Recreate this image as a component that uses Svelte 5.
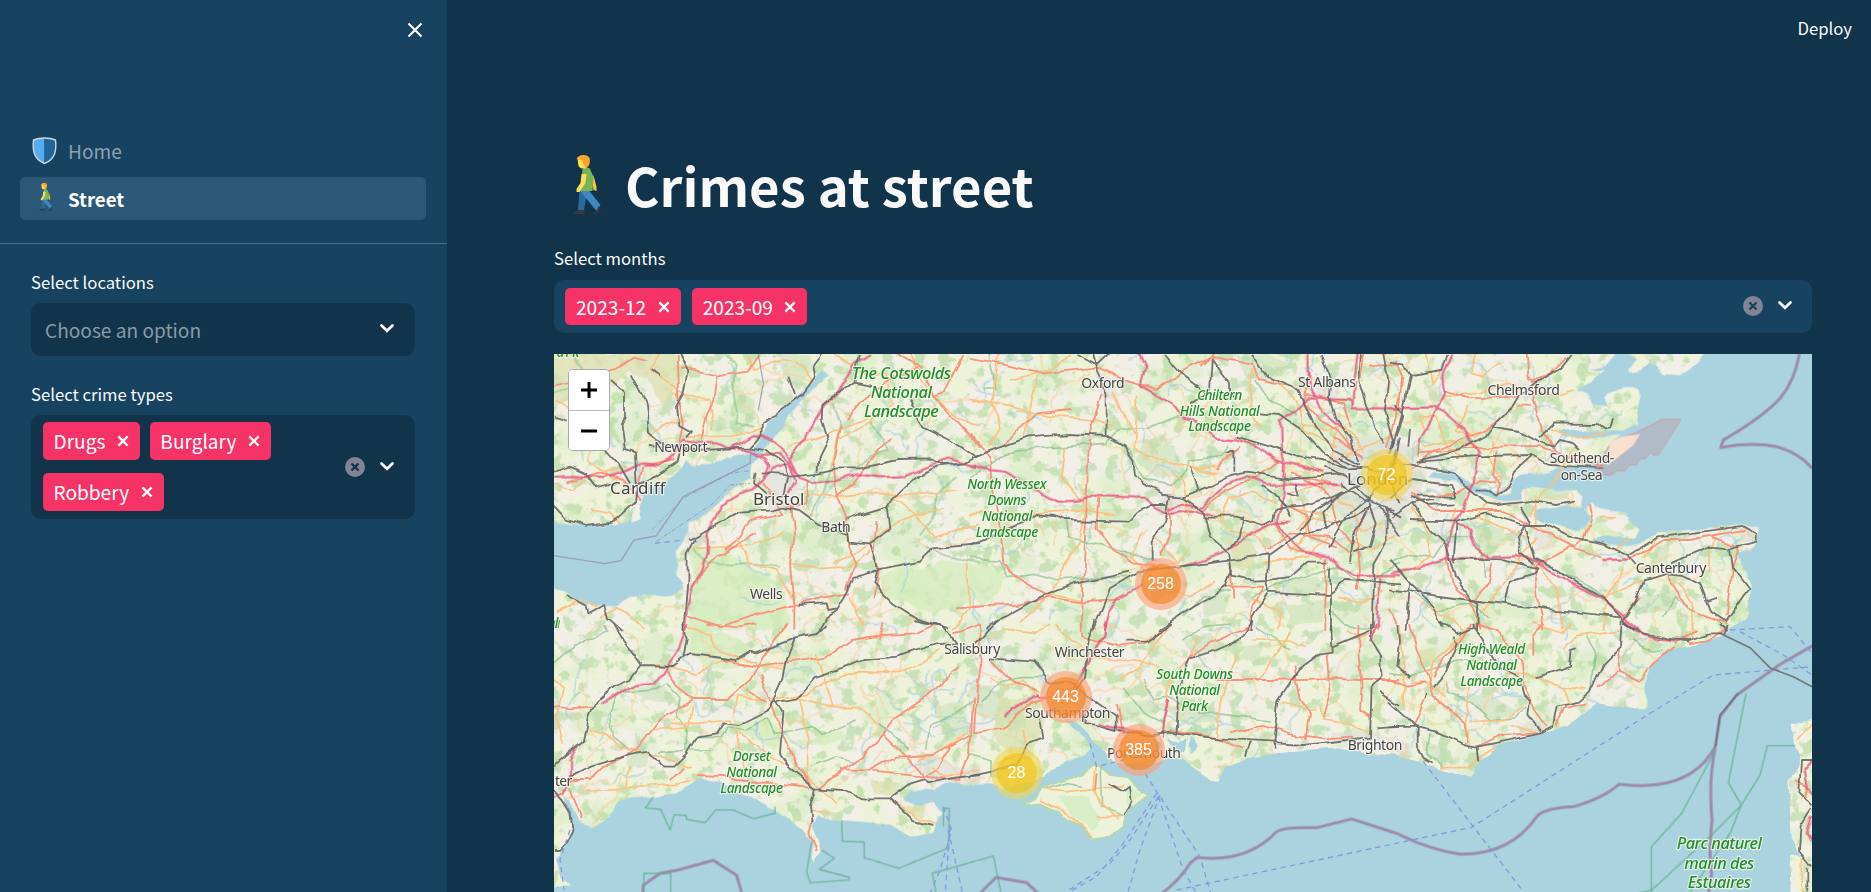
<script>
  const pages = [
    { name: 'Home', icon: 'shield', active: false },
    { name: 'Street', icon: 'walker', active: true }
  ];
  const crimeTypes = ['Drugs', 'Burglary', 'Robbery'];
  const months = ['2023-12', '2023-09'];

  // Cluster pins, positioned in pixels from the map's top left corner.
  const clusters = [
    { n: 72, x: 832.5, y: 121, size: 'medium' },
    { n: 258, x: 606.5, y: 230, size: 'large' },
    { n: 443, x: 511.5, y: 343, size: 'large' },
    { n: 385, x: 584.5, y: 396, size: 'large' },
    { n: 28, x: 462.5, y: 419, size: 'medium' }
  ];

  // The map is kept as six sheets; each has its own origin in map units (3 units = 1px).
  const sheets = [
    {
      x: 0, y: 0,
      sea: 'M0,510L60,518L110,525L200,522L265,508L268,460L290,420L340,395L395,350L410,325L430,350L480,348L520,325L600,305L640,255L655,215L700,178L740,140L790,95L815,63L845,75L800,112L765,135L740,172L705,215L670,262L640,300L610,340L605,385L540,420L500,460L450,512L415,520L415,550L400,580L380,600L385,650L375,680L395,715L360,738L290,730L230,750L200,765L140,765L100,765L60,735L0,705Z',
      hill: 'M12,12H370L388,60L370,140L330,160L290,90L240,60L190,110L120,90L60,150L12,180ZM60,0',
      meadow: 'M420,590L520,600L600,650L700,720L720,820L640,840H420L430,700ZM985,690L1040,655L1120,660L1180,630L1260,640L1290,700L1250,760L1150,790L1060,750L1010,740Z',
      wood: 'M690,12H770L790,60L740,110L700,80ZM470,220L520,200L535,235L490,245ZM545,90L610,150L610,210L560,190ZM850,495L895,510L890,570L830,600L800,580Z',
      town: 'M655,370L710,360L750,400L720,470L660,490L640,420ZM225,350L290,345L300,420L260,450L220,420ZM400,545L465,550L460,580L410,585Z',
      second: 'M12,160L90,190L130,260L110,330L210,400M330,12L300,60L350,100L400,130L480,150L490,240M12,400L70,420L120,380L230,350M590,12L610,60L700,30L760,50L790,100M405,262L540,258L640,235M720,290L790,270L860,240L980,200M760,430L850,440L960,430L1100,435L1220,420M850,640L900,620L1000,545L1100,490L1180,480M720,640L820,655L900,650L960,600M430,595L540,590L600,590L700,550M730,750L680,660L590,640M560,560L600,650M850,12L960,80L1010,60M1150,140L1220,200L1290,230M1030,440L1100,490L1150,560L1290,520M1000,60L1030,160L960,220L860,270L840,350M900,740L940,830M1080,12L1110,80L1150,140M1250,640L1255,780L1210,840M150,800L200,770L240,800L280,840M20,790L100,750L140,770M300,260L350,220L410,210M120,480L180,490L210,520',
      primary: 'M12,110L110,85L190,60L260,20L290,30M380,12L385,150L395,220L385,280M390,52L500,80L590,65L625,12M500,80L490,150L470,200L455,270M1040,12L1120,60L1150,140L1290,290M1150,140L1180,130L1240,12M895,210L960,130L1030,80L1110,60M870,230L850,330L860,440L890,530L895,590L920,640L890,720M1020,260L900,410L855,440M720,460L730,560L720,640L730,760L730,840M620,550L500,620L460,660L440,700M410,795L510,830L600,800L730,765L830,740L900,730M980,510L970,620L985,660L970,740M640,400L700,490L600,510L570,560L520,600M770,390L770,460L720,470M265,420L280,350L370,330M50,395L150,370L220,390L270,450M1220,775L1290,770',
      motor: 'M12,380L75,378L165,384L230,362L270,342L320,348L365,320L395,272L440,278L500,280L535,295L570,280L610,255L640,258L690,290L720,330L745,380M960,12L915,40L880,95L860,135L825,165L795,215L770,270L740,300L715,340L670,355L640,390L610,418L570,430L515,462L497,500L470,550L470,610L450,670L425,710L410,780L405,840M535,293L600,300L640,325L655,350L640,385M630,315L680,310L715,340L745,380L780,392L850,396L925,372L985,382L1060,378L1110,360L1165,338L1190,325L1275,350M715,345L735,390L712,430',
      rail: 'M388,12L412,65L400,130L378,170L385,225L420,245L405,262M300,285L470,300L535,295L600,292L640,300L700,340L712,375L700,440M600,292L635,255L635,225L700,175L760,130L795,80L790,45L815,12M635,370L720,377L805,368L860,355L930,355L1050,330L1150,328L1180,345L1240,340L1290,310M930,12L910,95L850,140L820,165L818,205L835,260L805,320L803,362M420,572L500,525L570,485L665,478L700,470L745,480L800,520L850,540L890,555M890,530L895,575L960,580L975,620L980,665L970,700L1030,760L1100,805L1200,835M885,510L925,495L1010,470L1030,440L1090,385L1160,350L1240,340M1010,470L1018,540L960,580M980,662L1110,635L1150,595L1290,582M980,665L910,690L890,730L860,780L830,800L808,840M435,570L413,610L412,700L400,840M12,203L50,215M180,90L225,130L225,200L215,225L225,300L255,310L260,400M245,70L290,155L300,245L350,285M155,285L205,340L240,400M12,365L60,350L105,370L140,415L200,400M12,465L50,505L110,525L190,515L255,455L262,400L300,390L380,335L388,300M740,765L830,760L835,780L860,775M1080,150L1120,230L1200,270L1270,318M910,95L960,105M620,365L615,400L650,430M715,80L735,135M305,60L330,80M50,738L110,770L115,790L160,765L170,800L215,840',
      park: 'M520,12L560,40L550,120L560,220L610,230M850,160L870,220L850,330L820,430L780,500M960,220L1020,300L960,320L900,370M1220,380L1160,430L1150,500L1110,560M430,595L470,640L560,640L690,650M1130,590L1200,620L1290,640M60,12L100,60L90,110L12,130'
    },
    {
      x: 1260, y: 0,
      hill: 'M790,570L830,560L860,620L820,670L790,640Z',
      meadow: 'M0,650L50,640L100,670L90,730L40,770L0,740Z',
      wood: 'M790,20L890,12L960,40L900,90L830,80ZM520,270L620,290L640,370L560,390L500,330ZM760,530L800,540L790,590L750,570ZM390,480L500,470L470,510L410,520ZM930,690L1040,680L1060,720L960,740ZM60,500L170,540L110,600L60,570ZM700,740L780,730L760,790L700,800ZM950,760L1060,750L1050,820L960,830Z',
      town: 'M1080,270L1290,260V560L1200,560L1120,500L1060,420ZM560,430L640,430L650,490L580,490ZM370,60L430,90L450,140L390,140ZM1040,100L1110,90L1100,150L1040,140Z',
      second: 'M90,12L70,160L90,230L60,290M0,145L120,170L240,200L380,210L430,230M280,290L270,380L350,470L330,560M500,140L490,290L580,330L740,370M200,80L180,180L160,260M430,120L490,260M660,500L640,400L600,360M660,350L740,350M850,60L840,180L870,230M0,490L180,490L330,480L440,500M240,740L300,620L330,570M150,820L240,730L340,750M520,540L480,620L560,690L660,740L740,690M660,600L620,640L560,560M780,540L860,560L890,620M880,640L1010,620L1080,560M840,740L930,790L920,840M1000,450L1010,550L960,610M1060,400L960,430L970,480L1080,500M1100,240L1080,330L1160,300L1280,250M920,100L990,160L1000,240L1100,290M1060,430L1140,470L1180,540L1240,520M980,340L1060,370L1050,430M1130,570L1200,600L1280,560M1100,740L1180,760L1240,720M980,540L1010,500L1090,520M1000,220L1060,240L1120,230L1180,300M750,520L780,440L850,430L920,460M300,12L240,60L120,90',
      primary: 'M0,20L100,40L220,70L380,52L460,90L560,120L640,60L720,20L850,45L870,90L950,110M360,260L380,180L395,130M360,270L355,400L345,560L340,700L335,840M0,250L60,320L65,420L90,520L100,640L130,680L240,740L340,755L450,745M0,770L140,765L240,740M100,290L130,250L200,190L300,180M385,440L380,530L430,600L490,640L560,650M600,470L600,560L570,620M740,360L790,305L810,290M700,480L770,420L860,380L930,330M1020,60L1000,150L1050,210L1100,240L1150,300M920,515L960,600L1060,620M950,470L1010,500L1020,560L1100,590M1190,480L1160,560L1170,660L1160,720M1000,130L1120,160L1140,230M1290,140L1270,230L1250,290M770,710L880,710L850,760L840,840M1090,260L1180,320M960,370L1120,410M1000,380L1080,440L1100,520L1150,590M1070,620L1060,760L1060,840M1180,12L1170,80M1200,50L1290,40M690,45L730,12M785,640L790,740M890,600L960,550L1080,560L1150,620',
      motor: 'M0,345L60,360L105,365L160,395L210,430L265,455L340,450L385,435L520,440L550,470L600,492L680,480L730,495M600,480L640,460L700,470L770,400L830,378L890,400L960,400L1100,405M508,12L525,50L512,110L600,160L630,200L670,210L740,262L800,268L850,285L925,330L960,340L1060,365M1155,165L1140,150L1010,145L985,170L930,215L932,290L945,340L940,440L920,510L970,580L1000,605L1075,615L1110,655L1160,675L1290,675M960,515L920,515L850,550L760,610L640,650M520,700L440,745L415,790L402,840M1015,12L1018,100L1060,190L1120,240M1155,90L1150,175L1290,175M1160,12L1150,90M1225,680L1220,840',
      rail: 'M0,325L80,295L175,262L300,252L410,258L465,290L490,330L495,375L520,405L580,435L640,440L700,415L780,375L830,365L960,385L1120,372M370,12L380,60L410,130L410,258M320,12L380,45L415,12M580,12L620,60L680,105L710,130L660,160M725,25L760,75L780,100L780,135L800,145M725,25L720,120M0,585L30,575L170,515L200,492L250,498L285,510L470,515L500,485L540,465L590,465M600,440L585,520L545,575L545,640M640,440L700,480L720,560L780,610L790,680L850,692L895,690L960,680L1010,635L1075,635M500,665L640,648L780,632L900,615L990,550L1070,535L1150,500L1200,470M700,500L800,500L880,525L910,510L915,475L1000,470L1080,445L1120,425M480,665L310,700L210,740L60,825L50,840M500,668L420,715L390,790L370,840M565,840L640,790L770,710L790,660M895,615L890,700L895,725L1075,735L1130,690L1290,700M895,725L850,800L845,840M845,12L890,80L985,120L1010,170L1035,230L1090,300L1170,340M1055,12L1085,80L1080,140L1100,210L1140,270L1165,330M1170,12L1165,90L1190,170L1215,240L1240,280M1240,12L1255,90L1245,180L1275,280M870,190L930,195L990,235L1060,310L1120,345M800,260L900,290L980,320L1050,330L1130,350M660,350L685,420M790,365L790,300L770,310M1250,480L1250,570L1210,640L1205,840M1270,480L1180,450L1110,400M1080,650L1080,840M875,405L910,430L945,470L960,500M1200,470L1150,560L1140,640M1110,430L1060,490L1070,540M1280,300L1260,370L1180,400L1120,430L1030,490L990,540M1290,260L1270,360L1200,440L1130,500L1080,590M1100,320L1170,350L1250,370L1290,460M1130,355L1200,350M1190,440L1220,520L1200,590L1150,610M980,400L990,440L950,430M820,500L810,560L780,600M1230,470L1290,560M1060,350L1130,380L1200,450L1290,500',
      park: 'M0,385L80,330L140,300L280,290L410,280L450,240L530,240L600,210L640,190M480,300L520,390L600,410L640,370L660,330L760,320L780,280M0,625L90,630L110,680L190,670L260,690L400,680L470,680M290,500L300,560L380,580L500,620L560,640M860,90L900,150L980,190M640,800L700,740L780,720M840,740L930,700L1100,650L1180,700L1290,640M1080,780L1120,820L1200,840M60,12L80,120L40,120'
    },
    {
      x: 2520, y: 0,
      sea: 'M960,0L925,35L900,55L870,75L820,72L808,52L785,38L750,62L718,68L715,58L745,30L690,0L650,45L600,60L640,60L600,100L555,120L600,135L610,160L650,170L640,140L700,105L735,105L745,130L742,225L700,248L640,245L560,235L500,240L520,258L650,262L690,258L650,305L640,345L590,350L500,350L480,365L440,375L395,370L370,385L355,430L325,440L300,420L270,410L250,400L200,375L130,365L115,382L190,390L230,415L290,440L330,455L385,450L395,425L430,410L490,420L560,420L580,440L575,470L530,470L440,480L430,500L470,520L520,535L570,540L600,500L580,480L605,460L640,475L700,490L745,540L735,560L640,560L600,570L700,590L760,575L800,550L900,540L1050,522L1105,525L1105,570L1080,600L1045,605L1055,650L1078,710L1080,790L1060,815L1000,840H1290V0Z',
      meadow: 'M590,520L640,520L700,560L640,565L600,540ZM400,430L450,420L490,440L440,450ZM1030,780L1070,750L1070,800L1040,820Z',
      wood: 'M250,530L340,540L330,600L270,590ZM330,180L370,160L350,210ZM790,590L840,580L830,640L790,640ZM740,740L800,730L880,720L860,780L760,790ZM450,420L540,420L530,450L470,450Z',
      town: 'M0,260L60,290L110,380L80,480L0,540ZM330,100L420,90L420,150L350,150ZM430,540L480,530L490,590L440,600ZM560,330L620,330L630,350L570,352ZM1040,530L1100,530L1095,570L1060,580Z',
      hill: '',
      second: 'M110,12L130,100L160,60M260,12L240,70L280,80L340,40M160,140L260,130L350,100L410,110L500,140L550,120M100,240L90,200L140,200L170,290L220,330M240,170L200,240L260,260L310,220M420,500L480,400L560,290M480,240L560,260L640,250M60,470L110,540L120,620L60,660M290,460L260,500L340,540L420,560M200,470L180,520M440,440L440,520L480,560M630,500L680,500M640,580L680,600L720,560M280,780L340,700L440,560M440,640L500,720L520,840M640,745L760,690M870,700L910,760L900,840M760,620L800,560M980,560L960,600L960,660M1060,530L1080,560M640,840L650,740L700,660M0,400L40,450M90,760L180,800L220,840M310,270L290,320L330,380L300,400M100,290L180,270L260,290',
      primary: 'M20,30L40,80L30,170M410,12L415,80L440,100L435,150L460,240L500,310M530,20L480,70L430,90M160,120L240,145L380,140M90,310L200,300L320,290L450,288L560,330L640,350M370,170L290,240L140,300L60,360M110,440L200,430L270,390L320,395M60,430L130,480L240,480L330,480L430,530L550,590L580,570L605,490L600,465M430,640L440,740L460,840M430,650L540,590L640,620M720,625L820,570L900,570L970,555L1060,540M820,650L840,690L900,780L960,800L1010,820M960,560L1050,590L1030,650L1010,800M240,760L300,700L310,640M0,780L20,820M170,625L185,700L240,750L270,840M430,170L380,170M750,740L700,800M320,300L310,370L330,400L325,440',
      motor: 'M190,12L160,80L165,130L140,180L90,270L85,320M0,175L130,172L160,185L230,245L265,310L250,400L225,470L190,520L240,535L260,590L300,620M0,668L60,660L170,625L250,625L380,618L470,640M440,640L560,710L640,750L690,790L750,840M190,520L170,580L170,625M640,630L720,628',
      rail: 'M0,35L40,40L60,75L160,60L175,12M60,75L40,180L10,290M545,12L510,55L440,95L390,130L370,165L320,215L290,258L210,300L80,335M305,230L390,243L450,275L490,290L510,270L550,280L570,300M450,262L490,220L620,222L640,238L655,235L663,205M90,335L250,322L420,318L480,345L640,355M420,320L375,360L355,410L322,440L290,422L260,422M40,340L150,360L190,370L240,420L290,460L320,465L430,452L500,465L555,455M60,440L110,465L200,460M60,510L200,515L290,490L400,525L470,525L540,560L640,580L715,615L800,562L900,550L1060,527L1100,550L1100,575L1020,595L960,590L890,620L845,640M715,615L740,645M1020,595L1030,660L1075,720L1010,815L960,780L930,700L880,675L830,670L765,690L740,750L700,810L735,840M60,455L120,540L165,580L195,680L240,745L262,760L258,840M200,515L190,640M400,520L425,590L435,625L500,660L560,700L640,745L700,810M400,525L380,560L390,610L430,640M0,718L240,750L690,802M0,630L60,700L130,770L160,830M60,700L50,840M190,625L340,628L440,655L430,670L360,690L345,765M390,470L420,520M0,310L40,200L20,160M0,440L60,390L180,405L200,440L80,440M60,235L55,290M0,500L60,460L130,450M950,750L980,740',
      park: 'M0,640L60,610L130,620L170,560L240,560M240,540L280,610L290,690M380,540L400,620L500,660L600,710L640,740M60,720L140,780L240,760L300,800M820,800L860,740L900,780'
    },
    {
      x: 0, y: 810,
      sea: 'M70,620L45,530L55,535L90,610L130,622L175,595L200,545L320,525L400,510L450,475L500,485L575,515L640,550L720,600L760,635L785,670L790,725L812,690L800,660L785,620L800,590L870,600L1000,610L1080,650L1150,635L1165,600L1180,575L1150,545L1110,555L1060,540L1080,510L1160,515L1190,490L1290,495V840H0L12,800L60,795L30,770L15,720L35,690L65,650Z',
      hill: 'M960,480L1050,490L1040,530L970,520ZM1060,560L1130,550L1120,590L1060,580Z',
      meadow: 'M420,20L560,50L600,90L560,140L480,150L420,90ZM520,310L640,300L700,330L680,390L600,350ZM700,370L780,360L870,330L900,350L820,380Z',
      wood: 'M200,210L340,200L380,240L300,240ZM1150,270L1240,240L1260,330L1200,370ZM230,400L300,400L290,440L230,440Z',
      town: 'M1090,420L1150,400L1200,440L1290,440V490L1190,490L1130,500ZM760,600L790,600L785,640ZM620,210L660,210L660,240L630,240Z',
      second: 'M12,180L40,200L20,290L40,380M120,330L170,340L210,380L330,410L420,440M310,130L440,160L520,120L700,150M360,310L440,310L540,300L560,340L580,470M410,20L480,40L500,90L620,130M550,290L560,230L640,240L720,230L770,220L820,190L930,155L1020,160L1110,130L1170,90M745,235L850,260L920,260L980,310M750,240L770,330L770,470L820,510L860,550M560,330L620,380L700,430M110,510L220,505L300,495L380,490L440,480M240,440L230,500M780,575L840,575M1020,540L1100,590L1160,610M1100,420L1160,400L1250,340M1140,440L1180,470L1290,450M850,260L830,200L800,100M300,330L420,320L430,260',
      primary: 'M12,260L60,265L130,260M60,480L120,480L160,440L260,390L330,300L430,240L530,240L600,180L640,110L710,12M345,150L380,200L430,240M440,465L520,468L560,480L780,500M520,120L630,140L750,122L830,110L900,60L1000,45L1100,40L1160,12M630,170L660,240L700,350L740,440L790,500M590,210L650,250M470,12L560,22L620,12M810,505L880,450L940,410L1000,340L1040,290L1130,230L1230,140M870,450L960,455L1040,410L1150,405L1260,345M970,455L1120,470L1160,445L1200,380M1000,340L1060,400L1120,470L1230,480L1260,400L1270,230M785,600L775,640L800,690M1000,12L990,60M60,500L80,560L95,600M400,440L360,480M1210,40L1290,12',
      motor: 'M415,12L385,90L350,140L310,190L250,200L150,250M12,535L40,520L60,470L60,420L80,380',
      rail: 'M190,12L220,60L250,100L275,135L370,138L400,115L410,60L400,12M400,115L425,102L560,120L600,95L620,100L735,55L800,42L830,12M275,135L240,180L190,200L140,245L120,290L105,360L70,390L12,440M735,55L710,120L700,180L675,235L660,270L570,315L520,310L500,340L440,350L410,400L370,440L340,440L300,395L260,400L200,415L120,440L60,470M675,235L700,280L690,400L720,445L795,505L780,560L785,610M675,248L740,235L790,175L880,145L940,120L1040,110L1160,72L1220,70M795,505L880,510L940,535L1020,535L1080,490L1120,478L1135,490L1200,475L1290,465M1020,535L1090,600L1150,615M12,510L40,540L65,580L70,630L50,670L30,690L12,690M1090,0L1180,18L1220,70',
      park: 'M200,220L290,215L350,190L390,240L380,290L415,320L410,390L330,400M200,220L180,280L190,350L240,390L280,400M440,350L510,350L530,320L590,330L650,295L670,340L740,330L790,320L820,350L870,320L920,300M420,390L480,390M780,440L860,410L920,430M12,130L60,90L110,60L170,40L160,12M1130,390L1140,310L1200,290L1270,240M980,310L1030,340L1080,390'
    },
    {
      x: 1260, y: 810,
      sea: 'M0,492L60,490L100,508L220,470L240,450L300,430L365,385L330,345L285,300L315,305L370,370L410,400L430,430L470,430L540,440L600,415L640,420L700,460L740,487L775,440L830,415L920,400L1100,385L1190,400L1290,408V840H0Z',
      inlet: 'M590,350L625,365L650,355L645,395L620,400ZM660,350L690,380L670,400L655,380ZM550,350L575,370L560,400Z',
      island: 'M155,555L200,530L215,505L290,480L340,460L365,435L390,440L420,465L475,472L520,520L535,530L480,560L465,590L460,620L420,645L370,655L330,620L270,580L210,550Z',
      hill: 'M90,240L200,240L230,300L180,420L110,400L60,340Z',
      meadow: '',
      islandgreen: 'M260,530L360,525L390,600L370,635L310,590ZM470,490L520,525L470,550Z',
      wood: 'M0,190L60,200L100,260L60,300L0,280ZM90,270L160,260L170,320L120,330ZM640,60L720,40L760,90L680,110ZM440,250L540,240L560,280L460,290ZM820,80L880,70L860,130L820,120ZM560,250L740,270L760,310L640,310Z',
      town: 'M200,170L330,200L350,290L220,270ZM460,350L560,360L550,430L470,430ZM370,470L420,480L400,530L370,520ZM1080,340L1200,330L1290,370V400L1100,380Z',
      second: 'M100,30L200,40L240,12M360,110L450,120L560,130L600,180M450,180L500,150L560,60L600,12M200,230L160,180L100,200L60,170M230,510L290,515L380,505L460,500M375,440L370,500L390,550L440,600M380,590L450,590M210,540L290,580L370,650M740,350L750,250L770,180L800,100M850,60L960,60L1010,80M940,240L1000,270L1040,270M1050,260L1060,300L1130,310L1200,340M860,190L900,130L960,40M1130,30L1170,50L1210,40M450,260L440,330L500,340M680,50L660,120L600,180L590,260M260,12L300,60L360,100M160,330L170,400L80,430',
      primary: 'M30,12L35,120L20,210L12,340L100,325L180,250L220,230M60,120L100,160L200,215M335,12L340,50L450,80L520,70L600,12M440,250L460,340M600,330L700,345L740,355L790,375L820,390M660,110L720,70L840,20M740,180L900,180L1060,175L1170,180L1290,180M970,140L990,240L1020,280L1010,360M1070,100L1080,230L1060,290M1165,12L1165,100L1175,200L1170,270L1200,290M780,340L880,315L960,340L1060,355L1150,350M380,460L375,510',
      motor: 'M405,12L400,50L365,110L330,170L310,210M190,230L240,230M100,290L200,225M385,310L460,325L520,345M575,350L580,300L595,240M1215,12L1205,60L1195,65',
      rail: 'M85,0L40,50L20,70M60,115L190,125L225,170L235,190L310,190L370,240L440,290L440,330L370,310L340,310L345,280M375,0L360,50L345,170L320,210M210,290L220,355L180,370L140,430L60,455L0,470M470,65L530,65L600,12M445,330L520,345L600,335L740,355L910,365L920,370L1000,375L1130,360L1200,350L1205,200L1235,170L1230,110L1200,60L1200,12M620,335L625,200L660,115L740,90L810,60L850,0M910,365L925,240L985,150L1050,100L1085,95L1080,12M1085,80L1195,35M840,365L825,410M1230,215L1290,255M1220,325L1290,320M415,490L460,515L480,500L485,540L460,585M905,365L915,385',
      park: 'M30,240L100,180L160,170L220,170M520,180L560,240L600,230L690,280L760,280L830,290L900,300M220,510L290,490L340,500M390,440L395,560L460,590M0,400L60,420L60,470M640,60L700,20L780,12M860,20L920,60L960,90M460,200L520,280L580,310'
    },
    {
      x: 2520, y: 810,
      sea: 'M0,405L80,420L150,445L240,470L255,445L290,410L320,375L440,345L530,320L580,280L620,250L720,265L770,265L765,190L790,130L835,90L920,75L1000,45L1060,0H1290V290L1205,315L1212,370L1225,400L1222,440L1195,480L1200,560L1205,660L1235,705L1207,700L1200,840H0Z',
      hill: 'M90,90L140,80L130,130L80,120Z',
      meadow: 'M80,290L120,310L100,330ZM1230,600L1260,590L1250,650Z',
      wood: 'M230,220L320,240L390,270L310,300L260,270ZM520,90L560,100L540,130ZM90,350L160,390L200,430L150,430L110,400ZM740,60L830,70L800,90ZM180,170L240,180L220,220Z',
      town: 'M1200,480L1225,470L1220,520L1200,520ZM390,320L460,310L450,335L400,340ZM0,350L60,370L70,410L0,395Z',
      second: 'M30,12L40,120L45,200L40,260M240,12L200,60L130,120L120,180M240,200L230,290L240,370M340,170L400,160L520,200L590,210M520,200L540,250M560,50L620,40L690,30M560,50L520,90M240,300L340,300L400,260M430,12L520,40L540,12M150,440L240,440L310,380M900,12L910,60M360,310L410,330L440,340M60,190L110,190L170,230M1266,310L1220,360M1240,710L1240,816',
      primary: 'M60,12L80,90L120,180L130,230L230,310L235,370M250,12L320,30L400,120L400,190L440,280L470,320M0,175L50,200L110,190M260,380L330,345L440,340M500,320L520,265L590,250M620,200L690,155L680,90M690,155L745,185L790,130L860,80M900,70L960,60L1010,20M130,170L160,110L210,60L240,12M70,320L110,230M430,110L430,50L460,12M860,70L920,30M1215,480L1250,500L1240,540',
      motor: 'M705,0L740,35L800,55L870,62M1266,420L1240,450L1250,500L1266,520M1266,590L1250,640L1266,670',
      rail: 'M0,245L50,290L80,325L80,370L100,410L125,425M0,322L70,320L140,335L220,372L260,380L450,340L490,320L500,260L570,245L600,220L640,130L690,80L695,0M260,380L265,430M245,12L280,60L320,140L390,180L400,220L420,240L415,290L450,335M440,175L540,140L545,90L560,85M25,12L30,60L22,140L60,175M190,50L200,70L165,160L130,200M150,0L200,40L250,20M700,5L760,40L850,58L900,60L960,40L1000,40L1010,15M870,60L900,65M1266,420L1230,420L1225,520L1266,560M1266,570L1235,620L1230,690L1266,735M1255,740V816M990,12L1010,30M108,240L110,225',
      park: 'M0,160L60,170L120,150L200,120L260,130M170,180L180,220L250,250L300,300L380,290L410,260M590,50L620,100L610,160L600,220M730,60L780,90L820,90M120,340L110,400L160,440'
    }
  ];

  const layers = ['town', 'meadow', 'hill', 'wood', 'sea', 'inlet', 'island', 'islandgreen', 'park', 'second', 'primary', 'motor', 'rail'];

  // Small streams and lanes are scattered with a fixed seed; the sea is painted over them.
  let seed = 41;
  const rnd = () => ((seed = (seed * 16807) % 2147483647) / 2147483647);
  const scatter = (count, steps, stride) =>
    Array.from({ length: count }, () => {
      let x = rnd() * 3780, y = rnd() * 1300, a = rnd() * 6.28;
      let d = `M${x.toFixed(0)},${y.toFixed(0)}`;
      for (let i = 0; i < steps; i++) {
        a += (rnd() - 0.5) * 1.6;
        x += Math.cos(a) * stride;
        y += Math.sin(a) * stride;
        d += `L${x.toFixed(0)},${y.toFixed(0)}`;
      }
      return d;
    }).join('');
  const streams = scatter(190, 9, 13);
  const lanes = scatter(170, 12, 18);

  // Labels: centre x, baseline, width and text, all in map units.
  const labels = [
    [393, 306, 160, 'Newport', 't'], [263, 433, 166, 'Cardiff', 'c'], [686, 465, 154, 'Bristol', 'c'],
    [858, 546, 88, 'Bath', 't'], [649, 747, 98, 'Wells', 't'], [1659, 113, 130, 'Oxford', 't'],
    [2331, 112, 174, 'St Albans', 't'], [2921, 134, 217, 'Chelmsford', 't'], [3096, 339, 194, 'Southend-', 't'],
    [3095, 389, 126, 'on-Sea', 't'], [3363, 668, 212, 'Canterbury', 't'], [1267, 913, 168, 'Salisbury', 't'],
    [1619, 921, 210, 'Winchester', 't'], [1553, 1105, 256, 'Southampton', 't'], [1782, 1223, 222, 'Portsmouth', 't'],
    [2475, 1200, 164, 'Brighton', 't'], [41, 1308, 52, 'ter', 't'], [2483, 404, 184, 'London', 'c'],
    [1054, 87, 298, 'The Cotswolds', 'G'], [1054, 144, 184, 'National', 'G'], [1054, 201, 224, 'Landscape', 'G'],
    [2009, 149, 136, 'Chiltern', 'g'], [2009, 197, 240, 'Hills National', 'g'], [2009, 244, 188, 'Landscape', 'g'],
    [1371, 417, 238, 'North Wessex', 'g'], [1371, 465, 118, 'Downs', 'g'], [1371, 513, 152, 'National', 'g'], [1371, 561, 188, 'Landscape', 'g'],
    [605, 1234, 114, 'Dorset', 'g'], [605, 1281, 152, 'National', 'g'], [605, 1329, 188, 'Landscape', 'g'],
    [1934, 987, 230, 'South Downs', 'g'], [1934, 1035, 152, 'National', 'g'], [1934, 1083, 80, 'Park', 'g'],
    [2825, 913, 202, 'High Weald', 'g'], [2825, 961, 152, 'National', 'g'], [2825, 1009, 188, 'Landscape', 'g'],
    [3508, 1498, 256, 'Parc naturel', 'G'], [3508, 1557, 210, 'marin des', 'G'], [3508, 1614, 190, 'Estuaires', 'G'],
    [40, 20, 96, 'Park', 'g'], [19, 835, 18, 'al', 'g']
  ];
</script>

{#snippet walker()}
  <svg class="walker" viewBox="0 0 28 60" aria-hidden="true">
    <path d="M20 20l3 12 0 4-3-1-1-6z" fill="#f9c440" />
    <path d="M6 35l-1.500 20h6L13 40z" fill="#2b6a9c" />
    <path d="M6 35h9l12 15-4 6-14-17z" fill="#3f87c1" />
    <path d="M0 58c0-2 3-2 5-3h6v4H0zM20 58l3-2 2-5 2 2c1 2-3 6-4 6h-3z" fill="#323943" />
    <path d="M9 14c3-2 7-2 8 1l3 7-1 14H7l1-10z" fill="#78b356" />
    <path d="M8 19l5 0-1 9-6 9-3 0 0-3 4-6z" fill="#fddc5c" />
    <path d="M4 4l1 7c2 3 5 3 8 2V3z" fill="#fddc5c" />
    <path d="M3 4C5-1 14-1 16 3c1 4 0 9-4 10L10 9 8 5z" fill="#fca62f" />
  </svg>
{/snippet}

{#snippet cross()}
  <svg class="cross" viewBox="0 0 12 12" aria-hidden="true"><path d="M1.400 1.400l9.200 9.200M10.600 1.400L1.400 10.600" /></svg>
{/snippet}

{#snippet tag(text)}
  <span class="tag"><span>{text}</span>{@render cross()}</span>
{/snippet}

{#snippet chevron()}
  <svg class="chevron" viewBox="0 0 16 11" aria-hidden="true"><path d="M2.500 2.500L8 7.800l5.500-5.300" /></svg>
{/snippet}

{#snippet clear()}
  <svg class="clear" viewBox="0 0 20 20" aria-hidden="true">
    <circle cx="10" cy="10" r="10" /><path d="M6.500 6.500l7 7M13.500 6.500l-7 7" />
  </svg>
{/snippet}

<div class="app">
  <aside>
    <div class="top">
      <svg class="close" viewBox="0 0 16 16" aria-hidden="true"><path d="M1.500 1.500l13 13M14.500 1.500l-13 13" /></svg>
    </div>
    <nav>
      {#each pages as page}
        <a class:active={page.active} href="#top">
          <span class="icon">
            {#if page.icon === 'shield'}
              <svg width="25" height="28" viewBox="0 0 25 28" aria-hidden="true">
                <path d="M12.500 1C9 1 5 1.500 1.500 3 .5 12 1 22 12.500 26.500z" fill="#55acee" />
                <path d="M12.500 1c3.500 0 7.500.5 11 2 1 9 .5 19-11 23.500z" fill="#226699" />
                <path d="M12.500 1C9 1 5 1.500 1.500 3 .5 12 1 22 12.500 26.500 24 22 24.500 12 23.500 3 20 1.500 16 1 12.500 1z" fill="none" stroke="#ccd6dd" stroke-width="1.400" />
              </svg>
            {:else}
              {@render walker()}
            {/if}
          </span>
          {page.name}
        </a>
      {/each}
    </nav>
    <div class="filters">
      <div class="field">
        <span class="label">Select locations</span>
        <div class="select single"><span class="hint">Choose an option</span>{@render chevron()}</div>
      </div>
      <div class="field">
        <span class="label">Select crime types</span>
        <div class="select">
          <div class="tags">{#each crimeTypes as t}{@render tag(t)}{/each}</div>
          {@render clear()}{@render chevron()}
        </div>
      </div>
    </div>
  </aside>

  <main>
    <header>Deploy</header>
    <section>
      <h1>{@render walker()}<span>Crimes at street</span></h1>
      <span class="label">Select months</span>
      <div class="select months">
        <div class="tags">{#each months as m}{@render tag(m)}{/each}</div>
        {@render clear()}{@render chevron()}
      </div>
      <div class="map">
        <svg class="ground" viewBox="12 12 3774 1614" width="1258" height="538">
          <defs>
            <filter id="wobble" x="0" y="0" width="3800" height="1650" filterUnits="userSpaceOnUse" color-interpolation-filters="sRGB">
              <feTurbulence type="fractalNoise" baseFrequency="0.014" numOctaves="2" seed="4" />
              <feDisplacementMap in="SourceGraphic" scale="24" xChannelSelector="R" yChannelSelector="G" />
              <feGaussianBlur stdDeviation="1.100" />
            </filter>
            <filter id="woods" x="0" y="0" width="3800" height="1650" filterUnits="userSpaceOnUse" color-interpolation-filters="sRGB">
              <feTurbulence type="fractalNoise" baseFrequency="0.024" numOctaves="5" seed="9" />
              <feColorMatrix values="0 0 0 0 .7  0 0 0 0 .85  0 0 0 0 .62  0 8 0 0 -4.300" />
            </filter>
            <filter id="fields" x="0" y="0" width="3800" height="1650" filterUnits="userSpaceOnUse" color-interpolation-filters="sRGB">
              <feTurbulence type="fractalNoise" baseFrequency="0.008" numOctaves="4" seed="21" />
              <feColorMatrix values="0 0 0 0 .935  0 0 0 0 .95  0 0 0 0 .85  7 0 0 0 -3" />
            </filter>
            <filter id="lush" x="0" y="0" width="3800" height="1650" filterUnits="userSpaceOnUse" color-interpolation-filters="sRGB">
              <feTurbulence type="fractalNoise" baseFrequency="0.006" numOctaves="5" seed="33" />
              <feColorMatrix values="0 0 0 0 .86  0 0 0 0 .93  0 0 0 0 .79  0 0 8 0 -4.500" />
            </filter>
          </defs>
          <rect width="3800" height="1650" fill="#f2efe7" />
          <rect width="3800" height="1650" filter="url(#fields)" />
          <rect width="3800" height="1650" filter="url(#lush)" opacity=".7" />
          <rect width="3800" height="1650" filter="url(#woods)" opacity=".6" />
          <g filter="url(#wobble)">
            {#each layers as layer}
              {#if layer === 'sea'}
                <path class="lane" d={lanes} />
                <path class="stream" d={streams} />
              {/if}
              {#each sheets as s}
                {#if s[layer]}
                  <path class={layer} d={s[layer]} transform="translate({s.x} {s.y})" />
                {/if}
              {/each}
            {/each}
          </g>
          <path class="range" d="M3335,208h58l-68,107-15,0-10-8-12,18-18,2-12,18-20,0-14,18-24,0-20,14-20-4-8,12-14-40 50-72 70-25z" />
          <path class="sand" d="M3170,320L3182,275L3215,260L3270,252L3250,285L3200,325L3170,345Z" />
          <g class="border">
            <path d="M3748,12Q3735,90 3690,145Q3640,200 3520,270L3512,293Q3600,275 3680,290Q3750,310 3786,355" />
            <path d="M277,1640L280,1605L330,1570L375,1562L490,1531L560,1576L578,1640" />
            <path d="M1280,1640L1338,1582L1430,1598L1475,1640M1830,1635Q1890,1590 1920,1540L1942,1522Q2090,1540 2180,1445Q2200,1430 2300,1433L2405,1407L2540,1450Q2640,1500 2730,1512Q2880,1515 2960,1400Q2980,1375 3070,1370Q3160,1345 3208,1302Q3420,1330 3496,1190L3510,1100L3560,1035L3690,943L3786,888M3496,1190Q3475,1290 3486,1410Q3475,1520 3485,1570L3474,1640" />
          </g>
          <path class="thin-border" d="M12,617L165,641L213,632L252,570L318,558L400,440L550,365L600,340L603,300M625,12L640,100L625,180" />
          <path class="thin-border dashed" d="M318,575L490,460L540,405L600,400M305,540L400,445L540,370L600,362" />
          <g class="reserve">
            <path d="M310,1340L286,1374L332,1378L360,1440L372,1394L408,1396L410,1408L465,1418L497,1380L550,1380L610,1406L675,1390L675,1370M785,1475L770,1565L780,1598L898,1590L898,1582L808,1558L853,1525L815,1500M875,1410L877,1474L942,1476L943,1523L1046,1555L1195,1494L1198,1375L1180,1375L1180,1430M282,1640V1570H362V1640M1160,1640L1147,1570L1330,1518L1355,1640" />
            <path d="M3588,1030L3535,1298L3574,1365L3630,1275L3652,1187H3736M3574,1365L3480,1460L3305,1620L3220,1640M3574,1365L3540,1450L3410,1640M3496,1200L3395,1390L3304,1490V1630" />
          </g>
          <g class="ferry">
            <path d="M1785,1270L1830,1340L1950,1520L1985,1640M1825,1340L1900,1560L1945,1640M1825,1340L1740,1470L1680,1540L1550,1625M1820,1330L1720,1480L1640,1580L1540,1635M1830,1335L1770,1500L1730,1640M1620,1180L1640,1250L1720,1230M2620,1235L2770,1430L2920,1625M1880,1620L2520,1484L2765,1432L3300,1090L3490,975L3786,950M3540,840L3720,830L3786,910M3570,845L3700,915L3786,975M1180,1370L1205,1440L1170,1560L1140,1630M1200,1430L1185,1640M1195,1440L1240,1640M60,1440L30,1530L42,1620M315,580L400,570" />
          </g>
          <path class="tunnel" d="M3510,850L3600,893L3662,955L3730,980L3786,1010M3496,1190L3510,1095L3565,1030" />
          {#each labels as [x, y, w, text, kind]}
            <text class="name {kind}" {x} {y} textLength={w}>{text}</text>
          {/each}
        </svg>
        <div class="zoom">
          <button aria-label="Zoom in"><svg viewBox="0 0 16 16"><path d="M8 0v16M0 8h16" /></svg></button>
          <button aria-label="Zoom out"><svg viewBox="0 0 16 16"><path d="M0 8h16" /></svg></button>
        </div>
        {#each clusters as c}
          <div class="cluster {c.size}" style="left:{c.x}px;top:{c.y}px"><span>{c.n}</span></div>
        {/each}
      </div>
    </section>
  </main>
</div>

<style>
  :global(body) { background: #11344b; overflow: hidden; }
  .app { display: flex; height: 892px; color: #fafafa; font-family: "Noto Sans CJK SC", "Noto Sans", sans-serif; font-size: 19.100px; line-height: 28px; }
  aside { width: 447px; flex: none; background: #174360; }
  .top { display: flex; justify-content: flex-end; box-sizing: border-box; padding: 22px 24px 0 0; height: 124px; }
  .close { width: 16px; height: 16px; fill: none; stroke: #fff; stroke-width: 2.100; }
  nav { padding: 0 21px 23px 20px; border-bottom: 1px solid #42708a; }
  nav a { display: flex; align-items: center; height: 43px; margin-top: 5px; padding-left: 11px; border-radius: 5px; color: #8ca1af; text-decoration: none; }
  nav a.active { background: #2b5877; color: #fff; font-weight: 600; font-size: 18.700px; }
  .icon { width: 27px; margin-right: 10px; display: flex; justify-content: center; }
  .icon .walker { width: 14px; height: 28px; margin: -3px 0 0 3px; }
  .filters { padding: 24px 32px 0 31px; display: flex; flex-direction: column; gap: 24px; }
  .field { display: flex; flex-direction: column; gap: 7px; }
  .label { font-size: 16.700px; line-height: 28px; display: block; }
  .select { display: flex; align-items: center; padding: 0 20px 0 12px; border-radius: 10px; background: #11344b; }
  .single { height: 53px; padding-left: 14px; justify-content: space-between; }
  .hint { color: #8b9aa5; }
  .tags { display: flex; flex-wrap: wrap; gap: 13px 10px; flex: 1; padding: 7px 0 8px; }
  .tag { display: flex; align-items: center; height: 38px; padding: 0 11px 0 10.500px; gap: 11.500px; border-radius: 5px; background: #f63366; color: #fff; }
  .cross { width: 12px; height: 12px; fill: none; stroke: #fff; stroke-width: 2.200; }
  .chevron { width: 16px; height: 11px; margin-top: -2px; fill: none; stroke: #fff; stroke-width: 2.700; stroke-linecap: round; }
  .clear { width: 20px; height: 20px; margin: -1px 14px 0 0; fill: #808495; stroke: #11344b; stroke-width: 2.400; }
  .clear circle { stroke: none; }
  .months .clear { stroke: #174360; }
  main { flex: 1; min-width: 0; display: flex; flex-direction: column; }
  header { display: flex; justify-content: flex-end; padding: 14px 19px 0 0; height: 127px; font-size: 16.700px; }
  section { width: 1258px; margin-left: 107px; }
  h1 { display: flex; align-items: center; margin: 0; height: 104px; font-size: 52.600px; line-height: 70px; font-weight: 700; }
  h1 span { margin-top: -17px; }
  h1 .walker { width: 29px; height: 60px; margin: -15px 23px 0 19px; }
  .months { height: 53px; margin-top: 8px; padding: 0 19px 0 11px; background: #174360; }
  .months .tags { gap: 11px; padding: 0; }
  .months .tag { height: 37px; padding: 0 11px; }
  .map { position: relative; height: 538px; margin-top: 21px; overflow: hidden; }
  .ground { display: block; }
  .ground path { fill: none; stroke-linejoin: round; }
  .ground .town { fill: #dfdcdb; opacity: .55; }
  .ground .meadow { fill: #d4ecbc; opacity: .75; }
  .ground .hill { fill: #dcdfae; opacity: .7; }
  .ground .wood { fill: #b9d9aa; opacity: .4; }
  .ground .sea, .ground .inlet { fill: #aad3df; }
  .ground .island { fill: #eff2da; stroke: #b5d9ac; stroke-width: 5; }
  .ground .islandgreen { fill: #d9eec6; }
  .ground .range { fill: #c08f9d; fill-opacity: .35; stroke: #cf9ea2; stroke-width: 3; }
  .ground .sand { fill: #f9dfcd; }
  .stream { stroke: #a3cfe0; stroke-width: 3.500; opacity: .85; }
  .lane { stroke: #f9cf9b; stroke-width: 3.500; opacity: .85; }
  .park { stroke: #6fb37c; stroke-width: 5; opacity: .55; }
  .second { stroke: #fbc282; stroke-width: 5; }
  .primary { stroke: #f8947c; stroke-width: 5.500; }
  .motor { stroke: #e6537f; stroke-width: 6.500; opacity: .85; }
  .rail { stroke: #666; stroke-width: 5.500; opacity: .9; }
  .tunnel { stroke: #70777d; stroke-width: 5; }
  .border { stroke: #9a84a6; stroke-width: 9; opacity: .9; }
  .thin-border { stroke: #9789ad; stroke-width: 4; opacity: .7; }
  .dashed { stroke-width: 3; stroke-dasharray: 14 5 4 5; }
  .reserve { stroke: #60ad8c; stroke-width: 4; opacity: .8; }
  .ferry { stroke: #849be0; stroke-width: 4; stroke-dasharray: 16 13; }
  .name { font-family: "Noto Sans", sans-serif; font-size: 42px; text-anchor: middle; fill: #444; stroke: #f7f6f0; stroke-opacity: .8; stroke-width: 7; paint-order: stroke; stroke-linejoin: round; }
  .c { font-size: 51px; }
  .g, .G { fill: #22902a; font-style: italic; font-size: 41px; font-weight: 500; }
  .G { font-size: 49px; }
  .zoom { position: absolute; left: 14px; top: 15px; border: 1px solid #aaa; border-radius: 5px; overflow: hidden; }
  .zoom button { display: flex; align-items: center; justify-content: center; width: 40px; height: 40px; padding: 0; border: 0; background: #fff; }
  .zoom button + button { height: 40px; border-top: 1px solid #bbb; }
  .zoom svg { width: 16px; height: 16px; stroke: #000; stroke-width: 3; }
  .cluster { position: absolute; width: 40px; height: 40px; padding: 6px; border-radius: 50%; transform: translate(-50%, -50%); }
  .cluster span { display: block; border-radius: 50%; text-align: center; font: 16px/40px "Liberation Sans", sans-serif; color: #fff; }
  .medium { background: rgba(241, 211, 87, .6); }
  .medium span { background: rgba(240, 194, 12, .6); }
  .large { background: rgba(253, 156, 115, .6); }
  .large span { background: rgba(241, 128, 23, .6); }
</style>
